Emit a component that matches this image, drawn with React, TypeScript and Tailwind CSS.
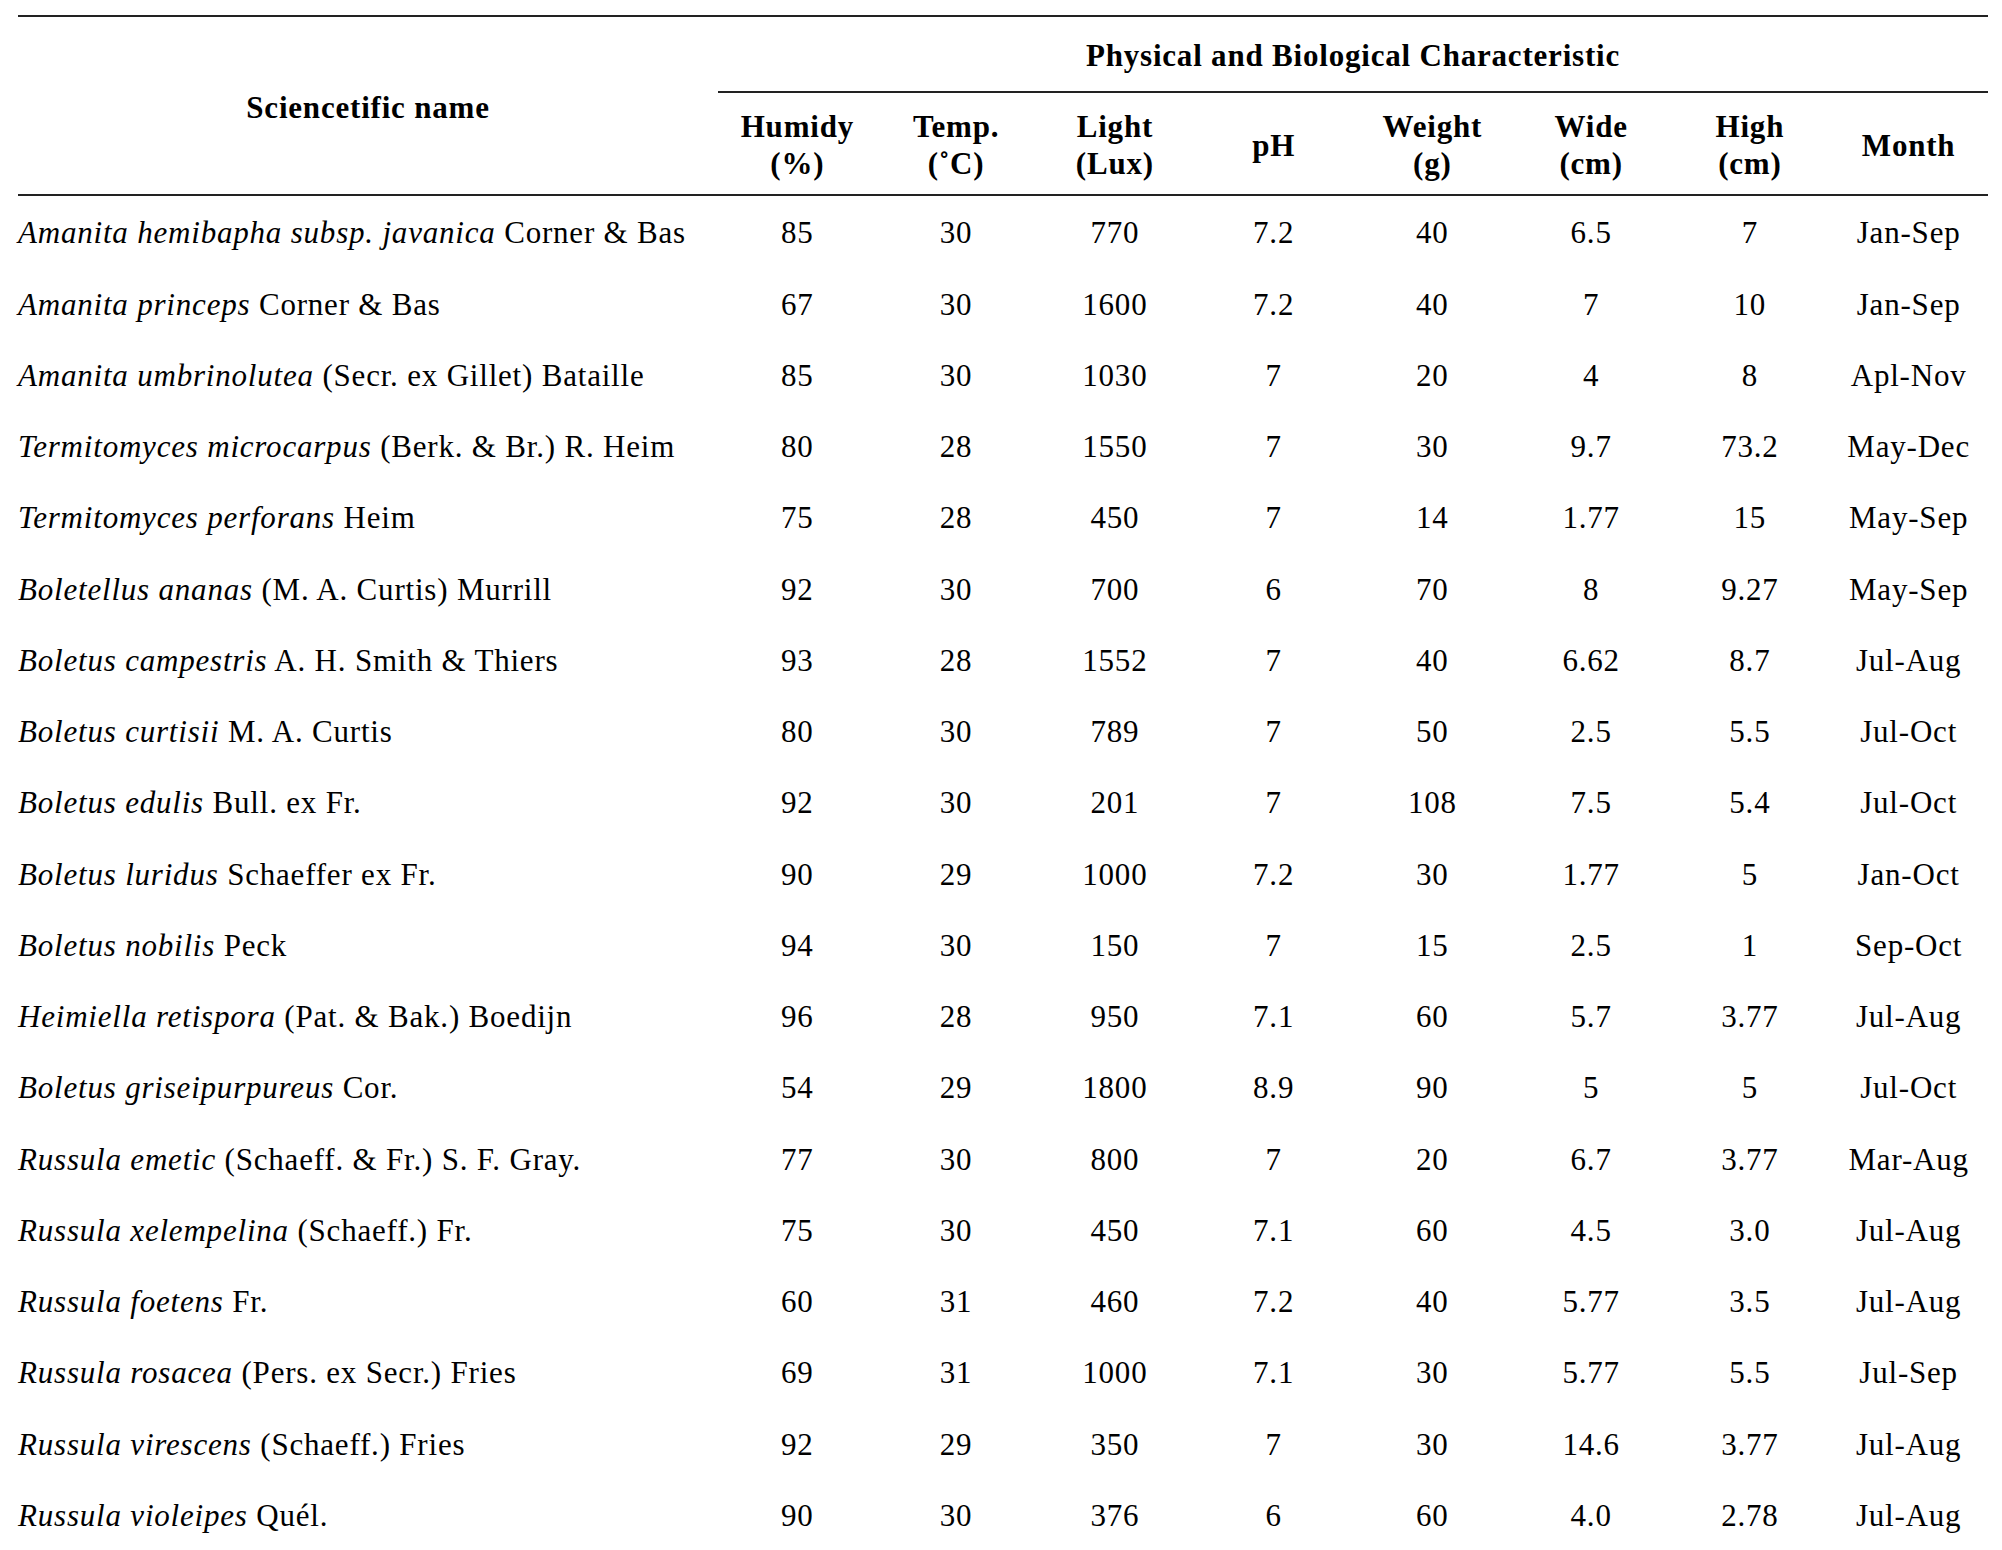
import React from "react";

type Row = {
  genus: string;
  author: string;
  values: string[];
};

const rows: Row[] = [
  { genus: "Amanita hemibapha subsp. javanica", author: "Corner & Bas", values: ["85", "30", "770", "7.2", "40", "6.5", "7", "Jan-Sep"] },
  { genus: "Amanita princeps", author: "Corner & Bas", values: ["67", "30", "1600", "7.2", "40", "7", "10", "Jan-Sep"] },
  { genus: "Amanita umbrinolutea", author: "(Secr. ex Gillet) Bataille", values: ["85", "30", "1030", "7", "20", "4", "8", "Apl-Nov"] },
  { genus: "Termitomyces microcarpus", author: "(Berk. & Br.) R. Heim", values: ["80", "28", "1550", "7", "30", "9.7", "73.2", "May-Dec"] },
  { genus: "Termitomyces perforans", author: "Heim", values: ["75", "28", "450", "7", "14", "1.77", "15", "May-Sep"] },
  { genus: "Boletellus ananas", author: "(M. A. Curtis) Murrill", values: ["92", "30", "700", "6", "70", "8", "9.27", "May-Sep"] },
  { genus: "Boletus campestris", author: "A. H. Smith & Thiers", values: ["93", "28", "1552", "7", "40", "6.62", "8.7", "Jul-Aug"] },
  { genus: "Boletus curtisii", author: "M. A. Curtis", values: ["80", "30", "789", "7", "50", "2.5", "5.5", "Jul-Oct"] },
  { genus: "Boletus edulis", author: "Bull. ex Fr.", values: ["92", "30", "201", "7", "108", "7.5", "5.4", "Jul-Oct"] },
  { genus: "Boletus luridus", author: "Schaeffer ex Fr.", values: ["90", "29", "1000", "7.2", "30", "1.77", "5", "Jan-Oct"] },
  { genus: "Boletus nobilis", author: "Peck", values: ["94", "30", "150", "7", "15", "2.5", "1", "Sep-Oct"] },
  { genus: "Heimiella retispora", author: "(Pat. & Bak.) Boedijn", values: ["96", "28", "950", "7.1", "60", "5.7", "3.77", "Jul-Aug"] },
  { genus: "Boletus griseipurpureus", author: "Cor.", values: ["54", "29", "1800", "8.9", "90", "5", "5", "Jul-Oct"] },
  { genus: "Russula emetic", author: "(Schaeff. & Fr.) S. F. Gray.", values: ["77", "30", "800", "7", "20", "6.7", "3.77", "Mar-Aug"] },
  { genus: "Russula xelempelina", author: "(Schaeff.) Fr.", values: ["75", "30", "450", "7.1", "60", "4.5", "3.0", "Jul-Aug"] },
  { genus: "Russula foetens", author: "Fr.", values: ["60", "31", "460", "7.2", "40", "5.77", "3.5", "Jul-Aug"] },
  { genus: "Russula rosacea", author: "(Pers. ex Secr.) Fries", values: ["69", "31", "1000", "7.1", "30", "5.77", "5.5", "Jul-Sep"] },
  { genus: "Russula virescens", author: "(Schaeff.) Fries", values: ["92", "29", "350", "7", "30", "14.6", "3.77", "Jul-Aug"] },
  { genus: "Russula violeipes", author: "Quél.", values: ["90", "30", "376", "6", "60", "4.0", "2.78", "Jul-Aug"] },
];

const headers: [string, string?][] = [
  ["Humidy", "(%)"],
  ["Temp.", "(˚C)"],
  ["Light", "(Lux)"],
  ["pH"],
  ["Weight", "(g)"],
  ["Wide", "(cm)"],
  ["High", "(cm)"],
  ["Month"],
];

export default function App() {
  return (
    <div className="w-[2002px] h-[1550px] overflow-hidden bg-white pl-[18px] pt-[15px] text-black font-['Liberation_Serif',serif] text-[31px] tracking-[0.8px]">
      <div className="w-[1970px]">
        {/* Header */}
        <div className="grid grid-cols-[700px_repeat(8,1fr)] grid-rows-[76px_101px] border-t-2 border-b-2 border-[#222] font-bold">
          <div className="row-span-2 flex items-center justify-center pt-[6px]">
            Sciencetific name
          </div>
          <div className="col-span-8 flex items-center justify-center border-b-2 border-[#222] pt-[4px]">
            Physical and Biological Characteristic
          </div>
          {headers.map(([a, b]) => (
            <div key={a} className="flex flex-col items-center justify-center leading-[37px] pt-[3px]">
              <span>{a}</span>
              {b && <span>{b}</span>}
            </div>
          ))}
        </div>

        {/* Body */}
        <div className="flex flex-col pt-[2px]">
          {rows.map((r) => (
            <div key={r.genus} className="grid grid-cols-[700px_repeat(8,1fr)] h-[71.25px] items-center">
              <div className="whitespace-nowrap">
                <i>{r.genus}</i> {r.author}
              </div>
              {r.values.map((v, i) => (
                <div key={i} className="text-center">
                  {v}
                </div>
              ))}
            </div>
          ))}
        </div>
      </div>
    </div>
  );
}
